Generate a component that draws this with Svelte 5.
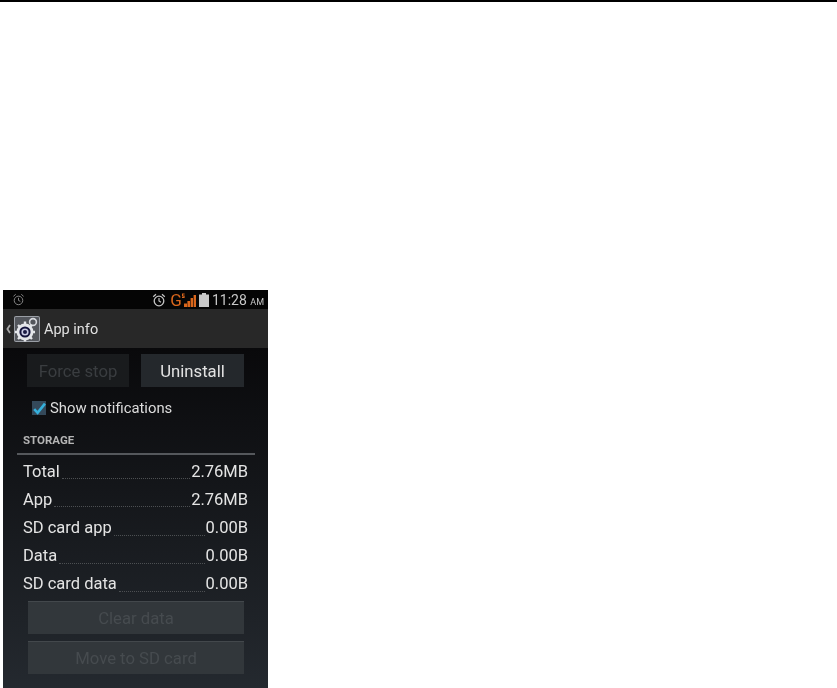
<script lang="ts">
    const rows = [
        { label: 'Total', value: '2.76MB' },
        { label: 'App', value: '2.76MB' },
        { label: 'SD card app', value: '0.00B' },
        { label: 'Data', value: '0.00B' },
        { label: 'SD card data', value: '0.00B' }
    ];
</script>

<div class="page">
    <div class="rule"></div>
    <div class="phone">
        <div class="status">
            <svg class="alarm dim" viewBox="0 0 14 14" width="13" height="13">
                <circle cx="7" cy="8" r="4.6" fill="none" stroke="currentColor" stroke-width="1" />
                <path d="M7 5.2V8l2 1M1.5 3.6 4 1.4M12.5 3.6 10 1.4" fill="none" stroke="currentColor" stroke-width="1" />
            </svg>
            <div class="status-right">
                <svg class="alarm" viewBox="0 0 14 14" width="14" height="14">
                    <circle cx="7" cy="8" r="4.8" fill="none" stroke="currentColor" stroke-width="1.3" />
                    <path d="M7 5V8l2 1.2M1.2 3.8 4 1.2M12.8 3.8 10 1.2" fill="none" stroke="currentColor" stroke-width="1.2" />
                </svg>
                <span class="net">G</span>
                <svg class="signal" viewBox="0 0 14 14" width="14" height="14">
                    <path d="M0 .5h2.6v1H1v1h1.6v2.6H0v-1h1.6v-.7H0zM2 10.5h3V14H2zM5.4 8h2.6v6H5.4zM8.6 5h2.4v9H8.6zM11.6 2H14v12h-2.4z" fill="#d9661c" />
                </svg>
                <svg class="battery" viewBox="0 0 10 14" width="10" height="14">
                    <path d="M3 0h4v1.5h3V14H0V1.5h3z" fill="#c9c9c9" />
                </svg>
                <span class="clock">11:28 <small>AM</small></span>
            </div>
        </div>

        <div class="actionbar">
            <svg class="chevron" viewBox="0 0 5 10" width="5" height="10">
                <path d="M4 1 1.4 5 4 9" fill="none" stroke="#a9a9a9" stroke-width="1.8" />
            </svg>
            <div class="app-icon">
                <svg viewBox="0 0 26 26" width="26" height="26">
                    <rect width="26" height="26" rx="2" fill="#9a9ea5" />
                    <rect x="1" y="1" width="24" height="24" rx="1" fill="#53565c" />
                    <circle cx="19" cy="6" r="3.4" fill="none" stroke="#d7d9de" stroke-width="1.6" />
                    <circle cx="11" cy="16" r="8.4" fill="#e4e6ea" />
                    <path d="M11 5.6v4M11 22.4v3M1 16h4M17 16h4M4 9l3 3M15 20l3 3M18 9l-3 3M7 20l-3 3" stroke="#e4e6ea" stroke-width="2.4" />
                    <circle cx="11" cy="16" r="5.6" fill="#14143c" />
                    <circle cx="11" cy="16" r="3.6" fill="#c9cbe4" />
                    <circle cx="11" cy="16" r="2" fill="#1a1a44" />
                </svg>
            </div>
            <span class="title">App info</span>
        </div>

        <div class="content">
            <div class="button-row">
                <div class="btn off">Force stop</div>
                <div class="btn on">Uninstall</div>
            </div>

            <div class="check-row">
                <span class="checkbox">
                    <svg viewBox="0 0 16 16" width="16" height="16">
                        <path d="M2.5 8.2 6.4 12.4 14.8 1.8" fill="none" stroke="#35b0dc" stroke-width="3" />
                    </svg>
                </span>
                <span>Show notifications</span>
            </div>

            <div class="section">STORAGE</div>
            <div class="divider"></div>

            <div class="rows">
                {#each rows as row}
                    <div class="row">
                        <span>{row.label}</span>
                        <span class="dots"></span>
                        <span>{row.value}</span>
                    </div>
                {/each}
            </div>

            <div class="wide">
                <div class="btn wide-btn">Clear data</div>
                <div class="btn wide-btn">Move to SD card</div>
            </div>
        </div>
    </div>
</div>

<style>
    :global(body) {
        background: #fff;
    }

    .page {
        width: 837px;
        height: 688px;
        overflow: hidden;
        font-family: Roboto, "Liberation Sans", sans-serif;
    }

    .rule {
        height: 2px;
        background: #000;
    }

    .phone {
        width: 265px;
        height: 398px;
        margin: 288px 0 0 3px;
        display: flex;
        flex-direction: column;
        overflow: hidden;
        filter: blur(0.35px);
    }

    .status {
        height: 19px;
        flex: none;
        background: #050505;
        display: flex;
        align-items: center;
        justify-content: space-between;
        padding: 0 4px 0 9px;
    }

    .alarm {
        color: #c4c4c4;
    }

    .alarm.dim {
        color: #8d8d8d;
    }

    .status-right {
        display: flex;
        align-items: center;
    }

    .net {
        color: #d9661c;
        font-size: 17px;
        margin-left: 4px;
    }

    .battery {
        margin-left: 3px;
    }

    .clock {
        color: #c8c8c8;
        font-size: 14px;
        margin-left: 3px;
    }

    .clock small {
        font-size: 9px;
    }

    .actionbar {
        height: 39px;
        flex: none;
        background: #282828;
        display: flex;
        align-items: center;
        padding-left: 3px;
    }

    .app-icon {
        display: flex;
        margin-left: 3px;
    }

    .title {
        color: #e0e0e0;
        font-size: 14.5px;
        margin: 2px 0 0 4px;
    }

    .content {
        flex: 1;
        background: linear-gradient(#09090b, #24292f);
        display: flex;
        flex-direction: column;
    }

    .button-row {
        display: flex;
        gap: 12px;
        margin: 6px 0 0 24px;
    }

    .btn {
        height: 33px;
        padding-top: 2px;
        box-sizing: border-box;
        display: flex;
        align-items: center;
        justify-content: center;
        font-size: 16.7px;
    }

    .btn.off {
        width: 102px;
        background: #191b1d;
        color: #3a3d40;
    }

    .btn.on {
        width: 103px;
        background: #24282c;
        color: #e2e2e2;
    }

    .check-row {
        display: flex;
        align-items: center;
        gap: 4px;
        margin: 13px 0 0 27px;
        height: 16px;
        color: #dcdcdc;
        font-size: 14.85px;
    }

    .checkbox {
        width: 14px;
        height: 14px;
        margin: 0 0 0 2px;
        background: #34495a;
        display: flex;
    }

    .section {
        margin: 17px 0 0 20px;
        color: #b5b5b5;
        font-size: 11.5px;
        font-weight: 700;
        line-height: 14px;
    }

    .divider {
        height: 2px;
        margin: 6px 13px 0 14px;
        background: #55585c;
    }

    .rows {
        margin: 2px 20px 0 20px;
    }

    .row {
        height: 28.2px;
        display: flex;
        align-items: center;
        color: #e4e4e4;
        font-size: 16.5px;
    }

    .dots {
        flex: 1;
        align-self: flex-end;
        margin: 0 1px 6px 2px;
        border-bottom: 1px dotted #4c4f52;
    }

    .wide {
        display: flex;
        flex-direction: column;
        gap: 7px;
        margin: 3px 0 0 25px;
        width: 216px;
    }

    .wide-btn {
        background: #32373b;
        border-top: 1px solid #43484c;
        color: #464b4f;
    }
</style>
